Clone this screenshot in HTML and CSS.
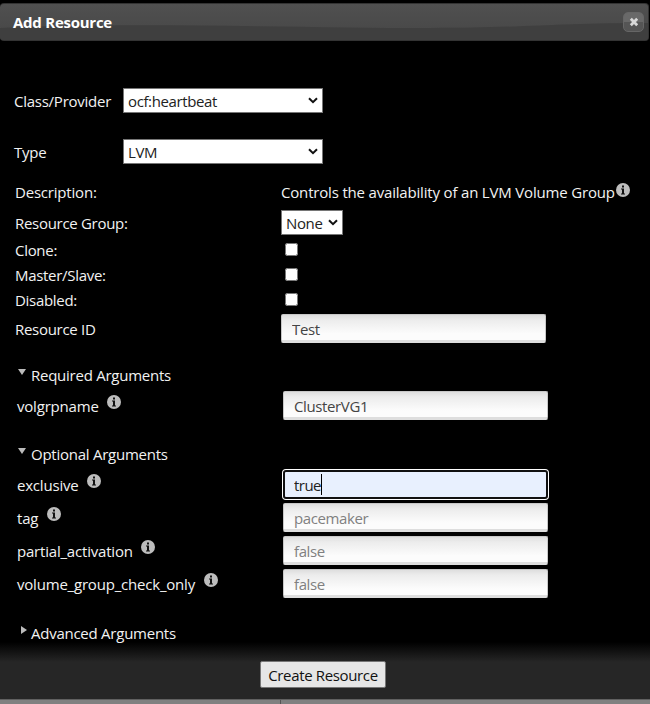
FILE: index.html
```html
<!DOCTYPE html>
<html lang="en">
<head>
<meta charset="utf-8">
<title>Add Resource</title>
<link rel="stylesheet" href="styles.css">
</head>
<body>
<svg width="0" height="0" class="defs">
  <symbol id="info" viewBox="0 0 14 14"><circle cx="7" cy="7" r="7" fill="#bdbdbd"/><path d="M6 2.5h2v2H6zM5 5.5h3v5h1v1H5v-1h1v-4H5z" fill="#111"/></symbol>
  <symbol id="chev" viewBox="0 0 10 7"><path d="M1 1.2L5 5.2L9 1.2" fill="none" stroke="#111" stroke-width="2"/></symbol>
</svg>
<div class="dialog">
  <header class="title">
    <svg class="gloss" viewBox="0 0 648 36" preserveAspectRatio="none"><path d="M0 24C130 18 300 24 430 24C520 24 560 19 648 19V36H0Z" fill="#3f3f3f"/></svg>
    <span class="title-text">Add Resource</span>
    <button class="close" aria-label="Close"><svg viewBox="0 0 10 10" width="10" height="10"><path d="M1.8 1.8L8.2 8.2M8.2 1.8L1.8 8.2" stroke="#d8d8d8" stroke-width="2.8"/></svg></button>
  </header>
  <main class="form">
    <div class="row provider"><label>Class/Provider</label><span class="select"><select><option>ocf:heartbeat</option></select><svg class="chev"><use href="#chev"/></svg></span></div>
    <div class="row type"><label>Type</label><span class="select"><select><option>LVM</option></select><svg class="chev"><use href="#chev"/></svg></span></div>
    <div class="row field desc"><label>Description:</label><span class="about">Controls the availability of an LVM Volume Group</span><svg class="info"><use href="#info"/></svg></div>
    <div class="row field group"><label>Resource Group:</label><span class="select small"><select><option>None</option></select><svg class="chev"><use href="#chev"/></svg></span></div>
    <div class="row field check"><label>Clone:</label><input type="checkbox"></div>
    <div class="row field check"><label>Master/Slave:</label><input type="checkbox"></div>
    <div class="row field check"><label>Disabled:</label><input type="checkbox"></div>
    <div class="row field rid"><label>Resource ID</label><input class="text" value="Test"></div>

    <h2 class="section required"><i class="down"></i>Required Arguments</h2>
    <div class="row arg"><label><span>volgrpname</span><svg class="info"><use href="#info"/></svg></label><input class="text" value="ClusterVG1"></div>
    <h2 class="section optional"><i class="down"></i>Optional Arguments</h2>
    <div class="row arg"><label><span>exclusive</span><svg class="info"><use href="#info"/></svg></label><span class="active"><input class="text" value="true"><i class="caret"></i></span></div>
    <div class="row arg"><label><span>tag</span><svg class="info"><use href="#info"/></svg></label><input class="text" placeholder="pacemaker"></div>
    <div class="row arg"><label><span>partial_activation</span><svg class="info"><use href="#info"/></svg></label><input class="text" placeholder="false"></div>
    <div class="row arg"><label><span>volume_group_check_only</span><svg class="info"><use href="#info"/></svg></label><input class="text" placeholder="false"></div>
    <h2 class="section advanced"><i class="right"></i>Advanced Arguments</h2>
  </main>
  <footer class="actions"><button class="create">Create Resource</button></footer>
  <div class="below"><span></span></div>
</div>
</body>
</html>
```
FILE: styles.css
```css
* { box-sizing: border-box; }
body {
  margin: 0;
  background: #000;
  color: #f2f2f2;
  font: 15px/20px "Open Sans", "Noto Sans", sans-serif;
  letter-spacing: -0.2px;
  overflow: hidden;
}
.defs { position: absolute; }
.dialog {
  width: 650px;
  height: 704px;
  padding-top: 3px;
  display: flex;
  flex-direction: column;
}
.title {
  position: relative;
  width: 649px;
  height: 38px;
  flex: none;
  display: flex;
  align-items: center;
  justify-content: space-between;
  padding: 0 4px 0 13px;
  background: linear-gradient(#505050, #464646);
  border: solid #333;
  border-width: 1px 1px 1px 0;
  border-radius: 4px;
  overflow: hidden;
}
.gloss { position: absolute; left: 0; top: 0; width: 100%; height: 100%; }
.title-text { position: relative; padding-bottom: 1px; font-weight: 700; color: #fff; letter-spacing: -0.25px; }
.close {
  position: relative;
  width: 21px;
  height: 20px;
  padding: 0;
  display: grid;
  place-items: center;
  background: linear-gradient(#696969 50%, #555 50%);
  border: 1px solid #666;
  border-radius: 5px;
}
.form { flex: none; height: 601px; position: relative; z-index: 1; }
.row { display: flex; align-items: center; white-space: nowrap; }
.provider, .type { height: 25px; padding-left: 14px; }
.provider { margin-top: 47px; }
.type { margin-top: 26px; }
.provider label, .type label { width: 109px; letter-spacing: -0.25px; }
.select { position: relative; display: flex; width: 200px; height: 25px; }
select {
  appearance: none;
  width: 100%;
  height: 100%;
  padding: 0 4px;
  border: 1px solid #767676;
  border-radius: 0;
  background: #fff;
  color: #222;
  font: inherit;
  letter-spacing: -0.38px;
}
.chev { position: absolute; right: 5px; top: 9px; width: 10px; height: 7px; pointer-events: none; }
.small { width: 62px; }
.field { padding-left: 15px; }
.field label { width: 266px; }
.info { width: 14px; height: 14px; flex: none; }
.desc { height: 26px; margin-top: 16px; }
.desc label, .about { padding-bottom: 2px; }
.desc .info { margin-bottom: 6px; }
.about { width: 335px; letter-spacing: -0.18px; }
.group { height: 25px; margin-top: 4px; }
.group label, .check label, .rid label { padding-top: 1px; letter-spacing: -0.3px; }
.check { height: 25px; }
.check:nth-of-type(5) { margin-top: 2px; }
.check input { margin: 0 0 0 4px; width: 13px; height: 13px; }
.rid { height: 29px; margin-top: 2px; }
.text {
  width: 265px;
  height: 29px;
  padding: 3px 10px 0;
  border: 1px solid #c8c8c8;
  border-bottom: 3px solid #dedede;
  border-radius: 2px;
  background: linear-gradient(#dedede, #ececec 20%, #fcfcfc 75%);
  color: #444;
  font: inherit;
  letter-spacing: -0.38px;
  outline: 0;
}
.text::placeholder { color: #808080; opacity: 1; }
.section {
  display: flex;
  align-items: center;
  height: 20px;
  margin: 0;
  padding-left: 18px;
  font-size: 15px;
  font-weight: 400;
  letter-spacing: -0.25px;
}
.section i { width: 13px; height: 12px; }
.section i::before { content: ""; display: block; width: 0; height: 0; }
.down::before { border: solid transparent; border-width: 6px 4.5px 0; border-top-color: #bbb; }
.right::before { margin-left: 3px; border: solid transparent; border-width: 4.5px 0 4.5px 6px; border-left-color: #bbb; }
.right { margin-top: -2px; }
.required { margin: 22px 0 4px; }
.optional { margin: 22px 0 4px; }
.advanced { margin-top: 23px; }
.arg { height: 33px; padding-left: 17px; }
.arg label { display: flex; align-items: center; width: 266px; }
.arg label .info { margin: 0 0 8px 8.5px; }
.active { position: relative; display: flex; }
.active .text { border: 2px solid #101010; border-radius: 3px; background: #e8f0fe; color: #222; padding: 0 9px; box-shadow: 0 0 0 1px #fff; letter-spacing: -0.55px; }
.caret { position: absolute; left: 38px; top: 4px; width: 1px; height: 21px; background: #000; }
.actions {
  flex: none;
  height: 57px;
  padding: 19px 0 0 260px;
  background: linear-gradient(#000, #262626 20px);
}
.create {
  display: block;
  width: 126px;
  height: 27px;
  padding: 0;
  background: #e6e6e6;
  border: 1px solid #767676;
  border-radius: 2px;
  color: #111;
  font: inherit;
  letter-spacing: -0.35px;
}
.below { flex: none; height: 5px; padding-left: 280px; background: #808080; border-top: 1px solid #606060; }
.below span { display: block; width: 1px; height: 4px; background: #555; }
```
